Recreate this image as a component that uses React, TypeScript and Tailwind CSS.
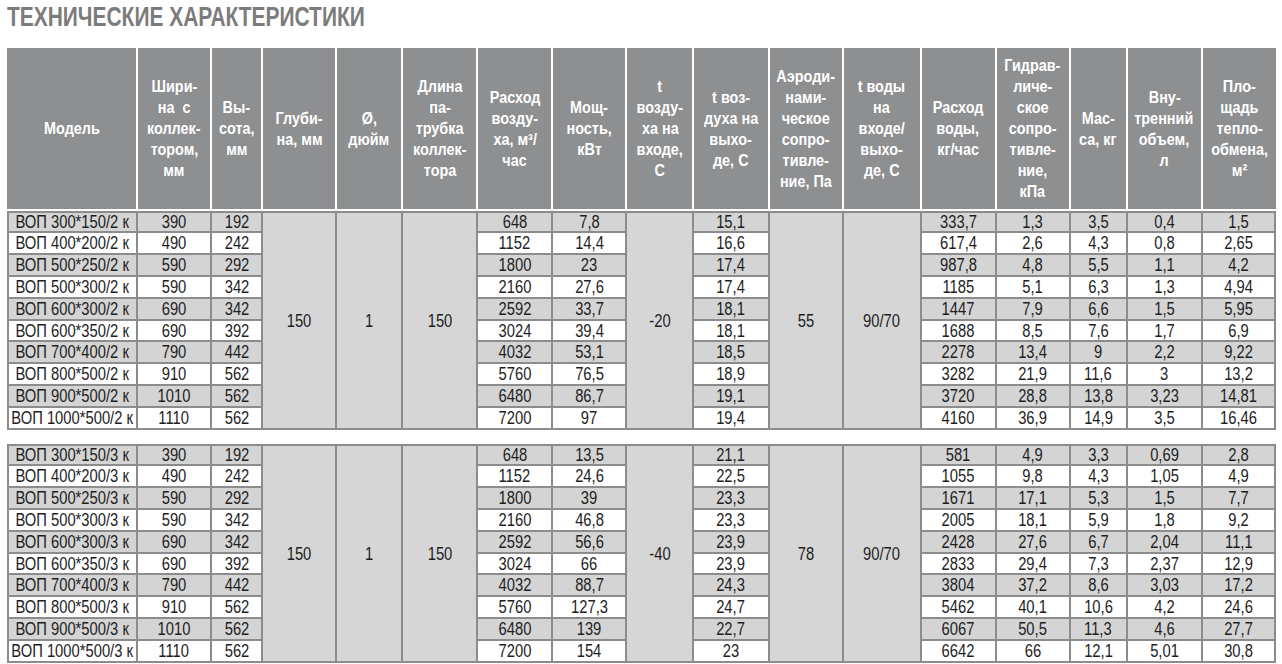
import React from "react";

const font = { fontFamily: '"Liberation Sans", Arial, sans-serif' };

const widths = [131, 74, 51, 74, 66, 75, 75, 74, 67, 75, 74, 78, 75, 74, 57, 75, 73];

const headers: string[][] = [
  ["Модель"],
  ["Шири-", "на  с", "коллек-", "тором,", "мм"],
  ["Вы-", "сота,", "мм"],
  ["Глуби-", "на, мм"],
  ["Ø,", "дюйм"],
  ["Длина", "па-", "трубка", "коллек-", "тора"],
  ["Расход", "возду-", "ха, м³/", "час"],
  ["Мощ-", "ность,", "кВт"],
  ["t", "возду-", "ха на", "входе,", "С"],
  ["t воз-", "духа на", "выхо-", "де, С"],
  ["Аэроди-", "нами-", "ческое", "сопро-", "тивле-", "ние, Па"],
  ["t воды", "на", "входе/", "выхо-", "де, С"],
  ["Расход", "воды,", "кг/час"],
  ["Гидрав-", "личе-", "ское", "сопро-", "тивле-", "ние,", "кПа"],
  ["Мас-", "са, кг"],
  ["Вну-", "тренний", "объем,", "л"],
  ["Пло-", "щадь", "тепло-", "обмена,", "м²"],
];

// model, width, height, air, power, tOut, water, hydr, mass, volume, area
const rows2: string[][] = [
  ["ВОП 300*150/2 к", "390", "192", "648", "7,8", "15,1", "333,7", "1,3", "3,5", "0,4", "1,5"],
  ["ВОП 400*200/2 к", "490", "242", "1152", "14,4", "16,6", "617,4", "2,6", "4,3", "0,8", "2,65"],
  ["ВОП 500*250/2 к", "590", "292", "1800", "23", "17,4", "987,8", "4,8", "5,5", "1,1", "4,2"],
  ["ВОП 500*300/2 к", "590", "342", "2160", "27,6", "17,4", "1185", "5,1", "6,3", "1,3", "4,94"],
  ["ВОП 600*300/2 к", "690", "342", "2592", "33,7", "18,1", "1447", "7,9", "6,6", "1,5", "5,95"],
  ["ВОП 600*350/2 к", "690", "392", "3024", "39,4", "18,1", "1688", "8,5", "7,6", "1,7", "6,9"],
  ["ВОП 700*400/2 к", "790", "442", "4032", "53,1", "18,5", "2278", "13,4", "9", "2,2", "9,22"],
  ["ВОП 800*500/2 к", "910", "562", "5760", "76,5", "18,9", "3282", "21,9", "11,6", "3", "13,2"],
  ["ВОП 900*500/2 к", "1010", "562", "6480", "86,7", "19,1", "3720", "28,8", "13,8", "3,23", "14,81"],
  ["ВОП 1000*500/2 к", "1110", "562", "7200", "97", "19,4", "4160", "36,9", "14,9", "3,5", "16,46"],
];

const rows3: string[][] = [
  ["ВОП 300*150/3 к", "390", "192", "648", "13,5", "21,1", "581", "4,9", "3,3", "0,69", "2,8"],
  ["ВОП 400*200/3 к", "490", "242", "1152", "24,6", "22,5", "1055", "9,8", "4,3", "1,05", "4,9"],
  ["ВОП 500*250/3 к", "590", "292", "1800", "39", "23,3", "1671", "17,1", "5,3", "1,5", "7,7"],
  ["ВОП 500*300/3 к", "590", "342", "2160", "46,8", "23,3", "2005", "18,1", "5,9", "1,8", "9,2"],
  ["ВОП 600*300/3 к", "690", "342", "2592", "56,6", "23,9", "2428", "27,6", "6,7", "2,04", "11,1"],
  ["ВОП 600*350/3 к", "690", "392", "3024", "66", "23,9", "2833", "29,4", "7,3", "2,37", "12,9"],
  ["ВОП 700*400/3 к", "790", "442", "4032", "88,7", "24,3", "3804", "37,2", "8,6", "3,03", "17,2"],
  ["ВОП 800*500/3 к", "910", "562", "5760", "127,3", "24,7", "5462", "40,1", "10,6", "4,2", "24,6"],
  ["ВОП 900*500/3 к", "1010", "562", "6480", "139", "22,7", "6067", "50,5", "11,3", "4,6", "27,7"],
  ["ВОП 1000*500/3 к", "1110", "562", "7200", "154", "23", "6642", "66", "12,1", "5,01", "30,8"],
];

function Cols() {
  return (
    <colgroup>
      {widths.map((w, i) => (
        <col key={i} style={{ width: w }} />
      ))}
    </colgroup>
  );
}

// narrow text: Arial Narrow is not installed, so squeeze Liberation Sans
function Narrow({ children }: { children: React.ReactNode }) {
  return (
    <div className="flex justify-center">
      <span className="inline-block whitespace-pre scale-x-[0.82]">{children}</span>
    </div>
  );
}

function Cell({ v, first, top, odd }: { v: string; first?: boolean; top?: boolean; odd: boolean }) {
  return (
    <td
      className={
        "h-[21.9px] p-0 align-middle border-r-2 border-b-2 border-[#8c8c8c] " +
        (odd ? "bg-[#d4d4d4] " : "bg-white ") +
        (first ? "border-l-2 " : "") +
        (top ? "border-t-2" : "")
      }
    >
      <Narrow>{v}</Narrow>
    </td>
  );
}

function Merged({ v }: { v: string }) {
  return (
    <td
      rowSpan={10}
      className="p-0 align-middle border-t-2 border-r-2 border-b-2 border-[#8c8c8c] bg-[#d6d6d6]"
    >
      <Narrow>{v}</Narrow>
    </td>
  );
}

function Body({ rows, merged }: { rows: string[][]; merged: string[] }) {
  return (
    <tbody className="text-[18px] leading-[18px] text-[#1e1e1e]">
      {rows.map((r, i) => {
        const odd = i % 2 === 0;
        const top = i === 0;
        return (
          <tr key={i}>
            <Cell v={r[0]} first top={top} odd={odd} />
            <Cell v={r[1]} top={top} odd={odd} />
            <Cell v={r[2]} top={top} odd={odd} />
            {top && <Merged v={merged[0]} />}
            {top && <Merged v={merged[1]} />}
            {top && <Merged v={merged[2]} />}
            <Cell v={r[3]} top={top} odd={odd} />
            <Cell v={r[4]} top={top} odd={odd} />
            {top && <Merged v={merged[3]} />}
            <Cell v={r[5]} top={top} odd={odd} />
            {top && <Merged v={merged[4]} />}
            {top && <Merged v={merged[5]} />}
            <Cell v={r[6]} top={top} odd={odd} />
            <Cell v={r[7]} top={top} odd={odd} />
            <Cell v={r[8]} top={top} odd={odd} />
            <Cell v={r[9]} top={top} odd={odd} />
            <Cell v={r[10]} top={top} odd={odd} />
          </tr>
        );
      })}
    </tbody>
  );
}

export default function App() {
  return (
    <div className="w-[1282px] h-[664px] overflow-hidden bg-white pl-[7px]" style={font}>
      <div className="pt-[4px] text-[27px] leading-[27px] font-bold text-[#7c7c7c]">
        <span className="inline-block whitespace-nowrap origin-left scale-x-[0.775]">
          ТЕХНИЧЕСКИЕ ХАРАКТЕРИСТИКИ
        </span>
      </div>
      <table className="mt-[17px] w-[1269px] table-fixed border-separate border-spacing-0">
        <Cols />
        <thead>
          <tr>
            {headers.map((lines, i) => (
              <th
                key={i}
                className={
                  "h-[163px] p-0 bg-[#8e8f91] text-white font-bold text-[16px] leading-[21px] align-middle border-b-2 border-white " +
                  (i < headers.length - 1 ? "border-r-2" : "")
                }
              >
                {lines.map((l, j) => (
                  <div key={j} className="flex justify-center">
                    <span className="inline-block whitespace-pre scale-x-[0.9]">{l}</span>
                  </div>
                ))}
              </th>
            ))}
          </tr>
        </thead>
        <Body rows={rows2} merged={["150", "1", "150", "-20", "55", "90/70"]} />
      </table>
      <table className="mt-[14px] w-[1269px] table-fixed border-separate border-spacing-0">
        <Cols />
        <Body rows={rows3} merged={["150", "1", "150", "-40", "78", "90/70"]} />
      </table>
    </div>
  );
}
